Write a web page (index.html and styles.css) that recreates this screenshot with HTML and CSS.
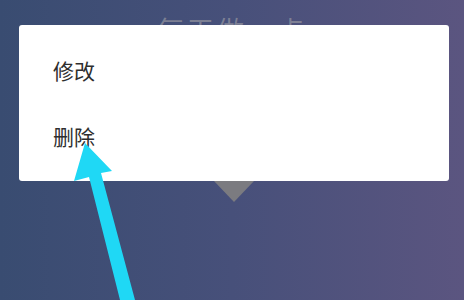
FILE: index.html
```html
<!DOCTYPE html>
<html lang="zh-CN">
<head>
  <meta charset="UTF-8">
  <meta name="viewport" content="width=device-width, initial-scale=1.0">
  <title>每天做一点</title>
  <link rel="stylesheet" href="styles.css">
</head>
<body>
  <div id="screen">
    <h1 class="page-title">每天做一点</h1>

    <div class="popup">
      <ul class="menu">
        <li class="menu-item">修改</li>
        <li class="menu-item">删除</li>
      </ul>
      <span class="popup-tail"></span>
    </div>

    <!-- annotation arrow pointing at 删除 -->
    <svg class="hint-arrow" width="464" height="300" viewBox="0 0 464 300">
      <polygon points="85,143 112,171 101,173 135,300 120,300 89,177 74,181" fill="#1fd8f5"/>
    </svg>
  </div>
</body>
</html>
```

FILE: styles.css
```css
:root {
  --bg-left: #394c71;
  --bg-mid: #47507a;
  --bg-right: #5b5580;
  --card-bg: #ffffff;
  --text-color: #2e2e2e;
  --tail-color: #7b7b80;
}
html, body {
  margin: 0;
  padding: 0;
}
body {
  font-family: "Noto Sans CJK SC", "Noto Sans", sans-serif;
}
#screen {
  position: relative;
  width: 464px;
  height: 300px;
  overflow: hidden;
  background: linear-gradient(90deg, var(--bg-left) 0%, var(--bg-mid) 50%, var(--bg-right) 100%);
}
.page-title {
  margin: 0;
  padding-top: 10px;
  text-align: center;
  font-size: 27px;
  font-weight: 400;
  letter-spacing: 3px;
  color: rgba(150, 150, 160, 0.7);
}
.popup {
  position: absolute;
  top: 25px;
  left: 19px;
  width: 430px;
}
.menu {
  list-style: none;
  margin: 0;
  padding: 12px 0;
  background: var(--card-bg);
  border-radius: 3px;
  position: relative;
  z-index: 1;
}
.menu-item {
  padding-left: 34px;
  height: 66px;
  line-height: 66px;
  font-size: 21px;
  color: var(--text-color);
}
.popup-tail {
  display: block;
  width: 0;
  height: 0;
  margin: 0 auto;
  border-left: 20px solid transparent;
  border-right: 20px solid transparent;
  border-top: 21px solid var(--tail-color);
}
.hint-arrow {
  position: absolute;
  top: 0;
  left: 0;
  z-index: 2;
}
```
